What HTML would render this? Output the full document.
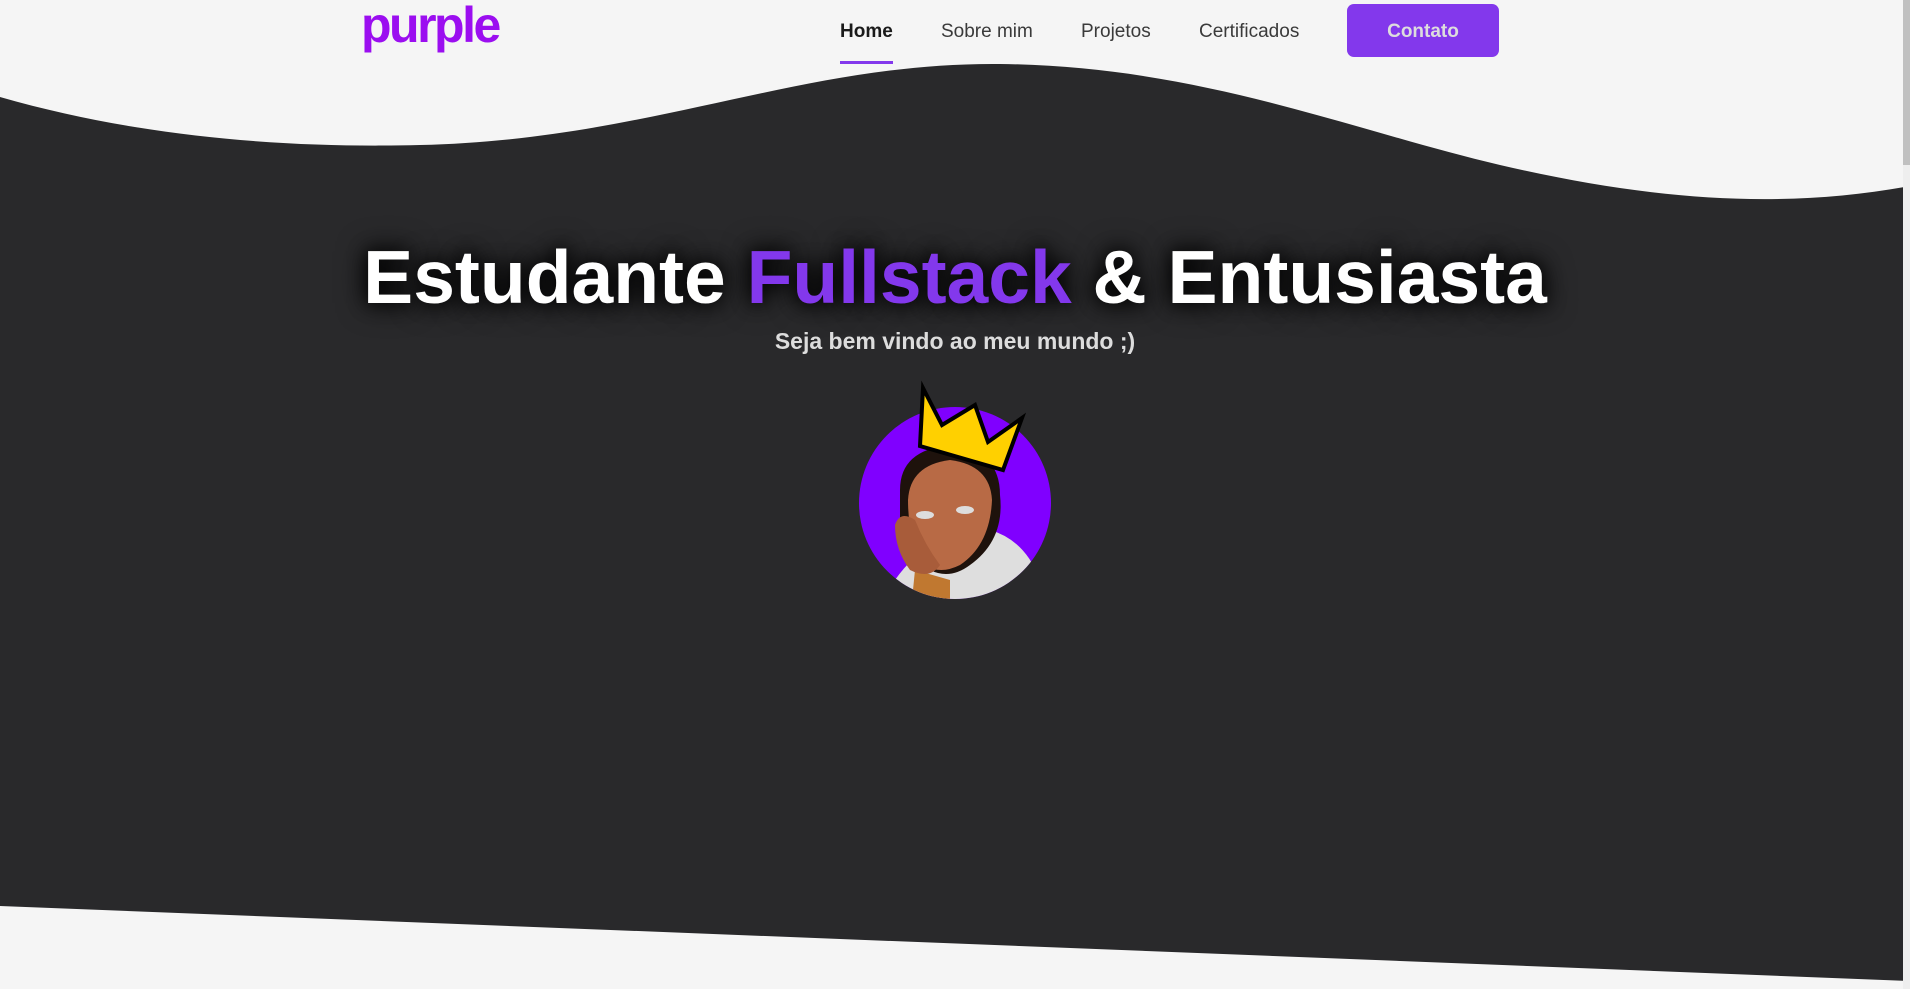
<!DOCTYPE html>
<html><head><meta charset="utf-8"><style>
html,body{margin:0;padding:0;}
body{width:1910px;height:989px;background:#f5f5f5;position:relative;overflow:hidden;font-family:"Liberation Sans",Arial,sans-serif;}
.bg{position:absolute;left:0;top:0;}
.logo{position:absolute;left:361px;top:-4px;font-size:50px;font-weight:bold;color:#9b0ef0;letter-spacing:-2.5px;}
.nav a{position:absolute;top:21px;font-size:19px;color:#3a3a3a;text-decoration:none;}
.btn{position:absolute;left:1347px;top:4px;width:152px;height:53px;background:#8338ec;border-radius:7px;color:#ddd;font-weight:bold;font-size:19px;text-align:center;line-height:55px;}
h1{position:absolute;left:0;width:1910px;top:234px;margin:0;text-align:center;font-size:75px;font-weight:bold;color:#fff;text-shadow:0 0 18px #000,0 0 30px #000;}
h1 span{color:#8338ec;}
.sub{position:absolute;left:0;width:1910px;top:328px;text-align:center;font-size:23px;font-weight:bold;color:#ddd;}
.sb{position:absolute;right:0;top:0;width:7px;height:989px;background:#eee}
.sb div{width:7px;height:165px;background:#c0c0c0}
</style></head><body>
<svg class="bg" width="1910" height="989" viewBox="0 0 1910 989">
<path d="M0,97 C150,140 300,148 420,145 C650,140 800,62 1000,64 C1200,66 1350,130 1500,165 C1650,200 1780,210 1910,186 L1910,981 L0,906 Z" fill="#29292b"/>
</svg>
<div class="logo">purple</div>
<div class="nav">
<a style="left:840px;font-weight:bold;color:#1a1a1a">Home</a>
<div style="position:absolute;left:840px;top:61px;width:53px;height:3px;background:#8338ec"></div>
<a style="left:941px">Sobre mim</a>
<a style="left:1081px">Projetos</a>
<a style="left:1199px">Certificados</a>
</div>
<div class="btn">Contato</div>
<h1>Estudante <span>Fullstack</span> &amp; Entusiasta</h1>
<div class="sub">Seja bem vindo ao meu mundo ;)</div>
<svg style="position:absolute;left:840px;top:380px" width="230" height="240" viewBox="0 0 230 240">
<defs><clipPath id="c"><circle cx="115" cy="123" r="96"/></clipPath></defs>
<circle cx="115" cy="123" r="96" fill="#8000ff"/>
<g clip-path="url(#c)">
<path d="M55,200 Q90,150 150,150 Q185,160 200,200 L200,240 L40,240 Z" fill="#dedede"/>
<path d="M75,190 L110,200 L110,240 L70,240 Z" fill="#c07830"/>
<path d="M60,110 Q60,70 110,65 Q160,70 160,115 Q165,160 130,185 Q110,200 90,190 Q65,175 60,140 Z" fill="#1e120c"/>
<path d="M68,120 Q70,85 110,80 Q150,85 152,120 Q150,165 120,185 Q100,195 85,185 Q68,160 68,120 Z" fill="#b86a45"/>
<path d="M55,145 Q60,130 75,140 Q85,165 100,185 Q90,200 70,190 Q55,170 55,145 Z" fill="#a85c3a"/>
<ellipse cx="85" cy="135" rx="9" ry="4" fill="#ddd"/><ellipse cx="125" cy="130" rx="9" ry="4" fill="#ddd"/>
</g>
<path d="M83,8 L102,45 L135,25 L148,62 L182,38 L163,90 L80,66 Z" fill="#ffd000" stroke="#000" stroke-width="4" stroke-linejoin="miter"/>
</svg>
<div class="sb"><div></div></div>
</body></html>
